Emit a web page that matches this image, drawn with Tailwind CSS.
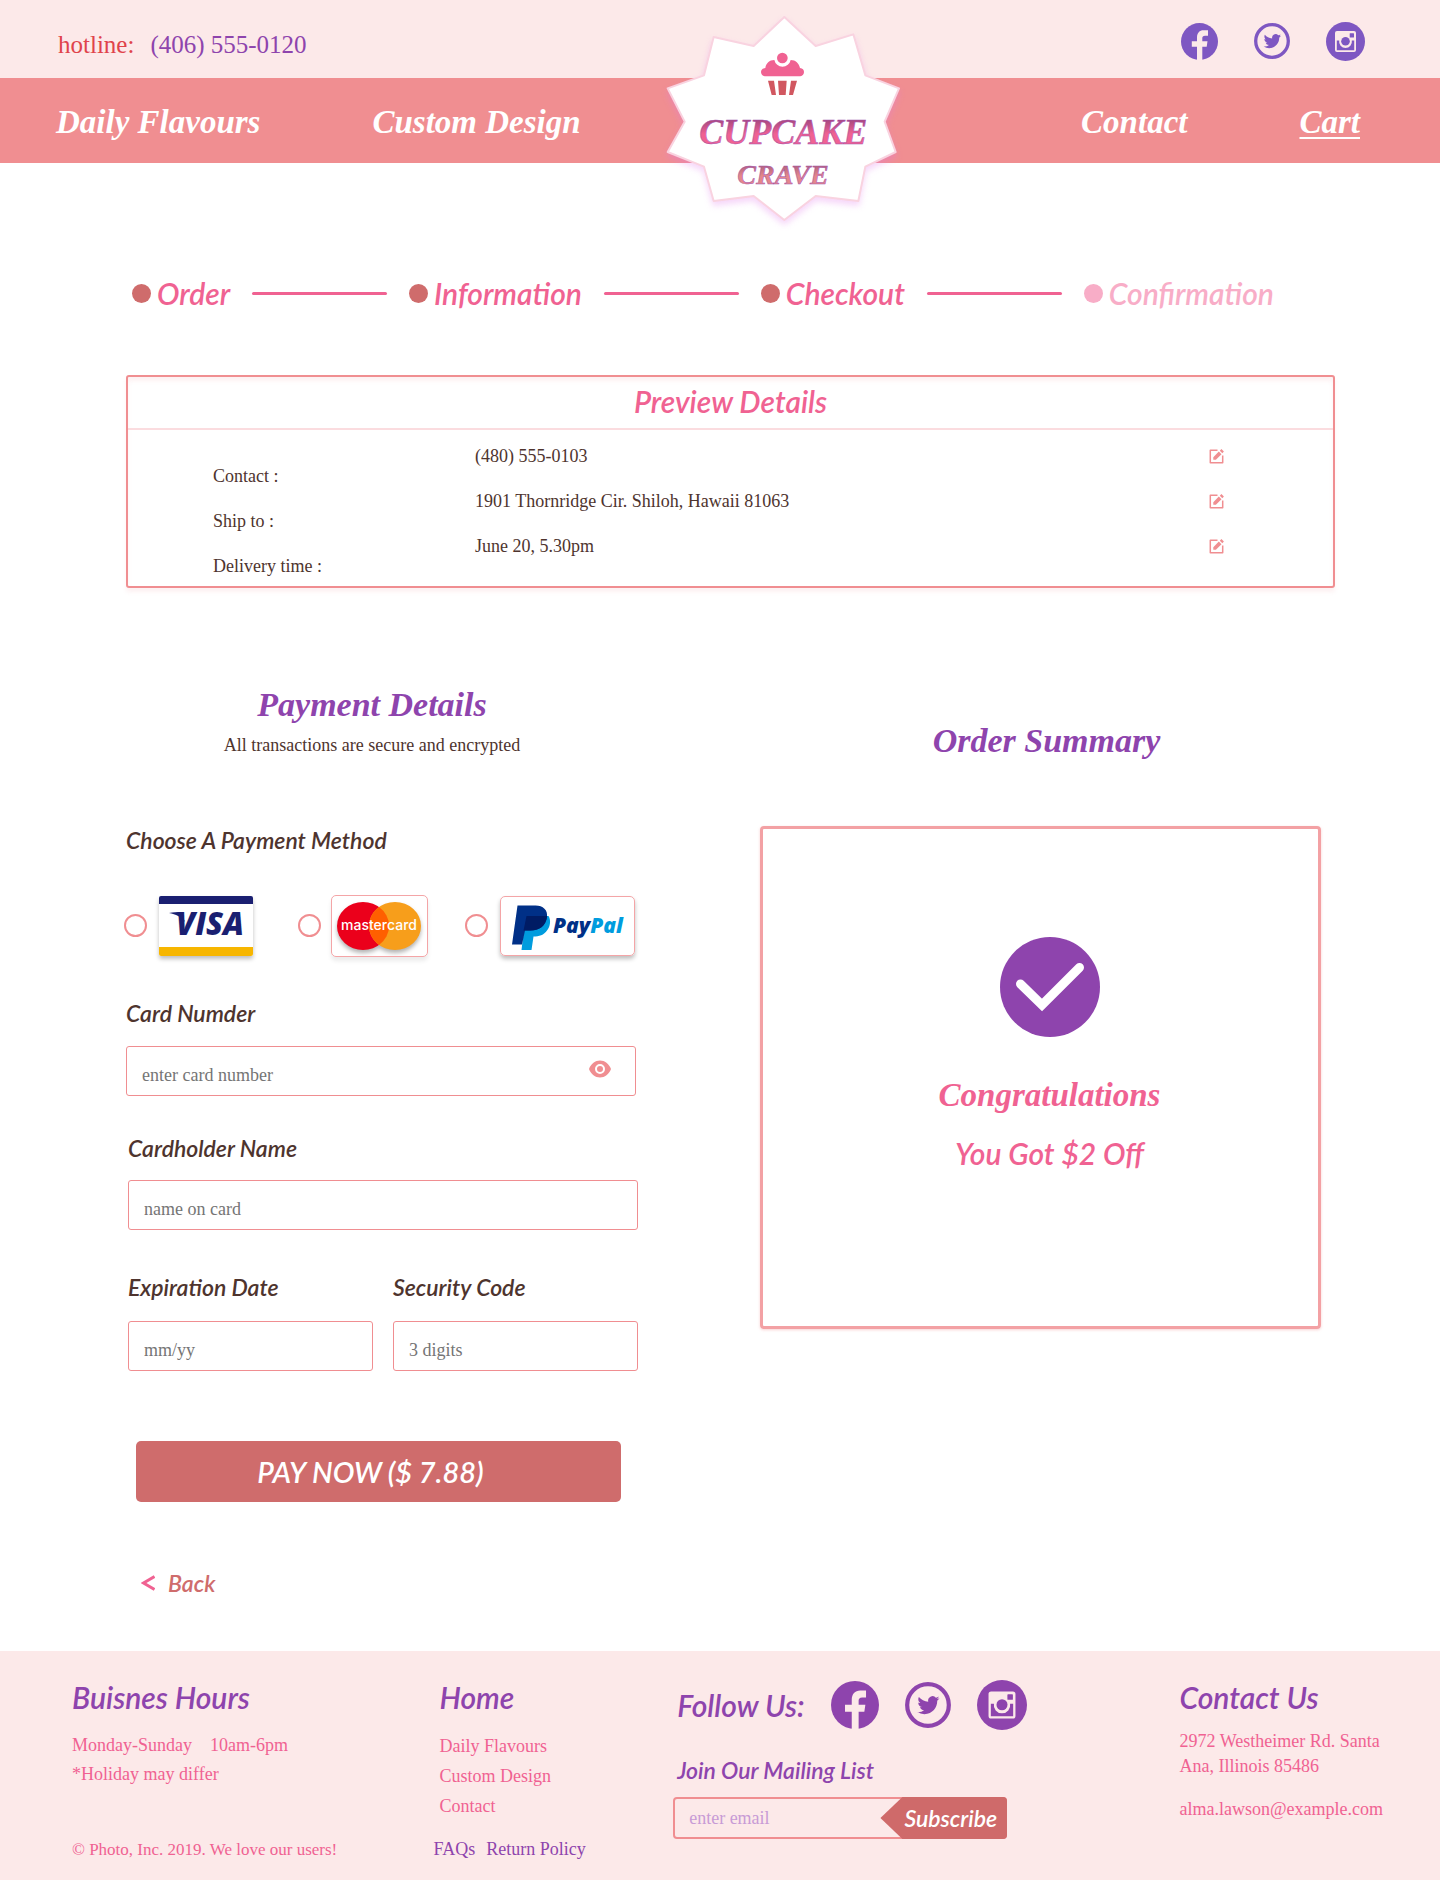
<!DOCTYPE html>
<html lang="en">
<head>
<meta charset="utf-8">
<meta name="viewport" content="width=device-width, initial-scale=1">
<title>Cupcake Crave – Checkout</title>
<script src="https://cdn.jsdelivr.net/npm/@tailwindcss/browser@4"></script>
</head>
<body class="bg-white font-['Liberation_Serif',serif] text-[18px] leading-6 text-[#4e342e]">

<!-- shared icons -->
<svg class="hidden" aria-hidden="true">
  <symbol id="facebook" viewBox="0 0 37 37">
    <circle cx="18.5" cy="18.5" r="18.5" fill="currentColor"/>
    <path d="M16 37V23.7h-5.2v-5.4H16V14.500c0-4.500 2.500-7.200 6.500-7.200H27v5.400h-3c-2 0-2.700 1-2.700 2.500v3.100h5.200l-.8 5.400h-4.400V37z" fill="#fce9e9"/>
  </symbol>
  <symbol id="twitter" viewBox="0 0 36 36">
    <circle cx="18" cy="18" r="16.300" fill="none" stroke="currentColor" stroke-width="3.300"/>
    <path transform="translate(9.700 9.500) scale(.72)" fill="currentColor" d="M23.953 4.57a10 10 0 01-2.825.775 4.958 4.958 0 002.163-2.723c-.951.555-2.005.959-3.127 1.184a4.920 4.920 0 00-8.384 4.482C7.690 8.095 4.067 6.130 1.640 3.162a4.822 4.822 0 00-.666 2.475c0 1.710.870 3.213 2.188 4.096a4.904 4.904 0 01-2.228-.616v.060a4.923 4.923 0 003.946 4.827 4.996 4.996 0 01-2.212.085 4.936 4.936 0 004.604 3.417 9.867 9.867 0 01-6.102 2.105c-.390 0-.779-.023-1.170-.067a13.995 13.995 0 007.557 2.209c9.053 0 13.998-7.496 13.998-13.985 0-.210 0-.420-.015-.630A9.935 9.935 0 0024 4.590z"/>
  </symbol>
  <symbol id="instagram" viewBox="0 0 39 39">
    <circle cx="19.500" cy="19.500" r="19.500" fill="currentColor"/>
    <rect x="9" y="9" width="21" height="21" rx="2" fill="#fce9e9"/>
    <path d="M10.800 18.500h2.400a6.400 6.400 0 1 0 12.600 0h2.400v9.700H10.800z" fill="currentColor"/>
    <circle cx="19.500" cy="19.300" r="4.300" fill="currentColor"/>
    <rect x="23.700" y="11.200" width="4.300" height="4.300" rx=".5" fill="currentColor"/>
  </symbol>
  <symbol id="edit" viewBox="0 0 15 15">
    <path d="M8.500 1.200H1.300V13.700H13.700V6.500" fill="none" stroke="currentColor" stroke-width="1.500" stroke-linejoin="round"/>
    <path d="M4.300 10.800V8.200L9.800 2.500l2.700 2.700-5.600 5.600zM10.800 1.700 12.400.1l2.500 2.500-1.600 1.600z" fill="currentColor"/>
  </symbol>
</svg>

<header class="relative">
  <div class="flex h-[78px] items-center justify-between bg-[#fce9e9] pr-[75px] pl-[58px]">
    <p class="flex gap-4 pt-3 text-[25px] leading-8"><span class="text-[#e0434b]">hotline:</span><a href="tel:+14065550120" class="text-[#8e44ad]">(406) 555-0120</a></p>
    <div class="flex items-center gap-9 pt-1 text-[#7e57c2]">
      <a href="#facebook-page" aria-label="Facebook"><svg class="size-[37px]"><use href="#facebook"/></svg></a>
      <a href="#twitter-page" aria-label="Twitter"><svg class="size-9"><use href="#twitter"/></svg></a>
      <a href="#instagram-page" aria-label="Instagram"><svg class="size-[39px]"><use href="#instagram"/></svg></a>
    </div>
  </div>
  <nav class="flex h-[85px] items-center justify-between bg-[#f08e91] pt-0.5 pr-20 pl-14 text-[33px] leading-10 font-bold text-white italic">
    <div class="flex gap-28"><a href="#flavours">Daily Flavours</a><a href="#design">Custom Design</a></div>
    <div class="flex gap-28"><a href="#contact">Contact</a><a href="#cart" class="underline decoration-2 underline-offset-4">Cart</a></div>
  </nav>
  <a href="#home" aria-label="Cupcake Crave" class="absolute top-[14px] left-1/2 -ml-[55px]">
    <svg class="h-[214px] w-60 overflow-visible" viewBox="75 42 720 642">
      <defs>
        <linearGradient id="pinkText" x1="0" y1="0" x2="0" y2="1"><stop offset=".2" stop-color="#a8487f"/><stop offset=".55" stop-color="#f06292"/><stop offset="1" stop-color="#f06292"/></linearGradient>
        <linearGradient id="peachText" x1="0" y1="0" x2="0" y2="1"><stop offset=".2" stop-color="#b0627c"/><stop offset=".55" stop-color="#e5878a"/><stop offset="1" stop-color="#e5878a"/></linearGradient>
      </defs>
      <path class="drop-shadow-[0_12px_10px_rgba(226,120,235,0.3)]" d="M433 51 527 138 640 103 676 226 777 265 734 365 767 456 676 500 655 603 527 588 433 660 341 588 221 603 192 500 83 456 134 365 83 265 192 226 221 111 341 138Z" fill="#fff" stroke="#f9d3e0" stroke-width="6" stroke-linejoin="round"/>
      <path d="M374 229c-7-2-11-7-11-13s5-11 13-12c2-14 12-24 27-24a25 25 0 0 0 49 0c15 0 25 10 28 24 8 1 12 6 12 12s-4 11-11 13z" fill="#f06292"/>
      <circle cx="427" cy="174" r="16" fill="#f06292"/>
      <path d="M384 242h18l6 43h-13zM414 242h26l-3 43h-20zM453 242h18l-12 43h-12z" fill="#d15760"/>
      <g text-anchor="middle" font-family="'Liberation Serif',serif" font-weight="700" font-style="italic" stroke="#a24fb0" stroke-width="1.500">
        <text x="430" y="432" font-size="108" fill="url(#pinkText)">CUPCAKE</text>
        <text x="429" y="552" font-size="84" fill="url(#peachText)">CRAVE</text>
      </g>
    </svg>
  </a>
</header>

<main class="pt-[110px] pr-[105px] pl-[126px]">
  <ol class="flex items-center justify-between pr-[61px] pl-1.5 font-['Lato',sans-serif] text-3xl leading-10 font-semibold text-[#f06292] italic">
    <li class="flex items-center gap-1.5"><span class="size-[19px] rounded-full bg-[#cf6c6c]"></span>Order</li>
    <li aria-hidden="true" class="h-[3px] w-[135px] rounded bg-[#f06292]"></li>
    <li class="flex items-center gap-1.5"><span class="size-[19px] rounded-full bg-[#cf6c6c]"></span>Information</li>
    <li aria-hidden="true" class="h-[3px] w-[135px] rounded bg-[#f06292]"></li>
    <li class="flex items-center gap-1.5" aria-current="step"><span class="size-[19px] rounded-full bg-[#cf6c6c]"></span>Checkout</li>
    <li aria-hidden="true" class="h-[3px] w-[135px] rounded bg-[#f06292]"></li>
    <li class="flex items-center gap-1.5 text-[#f8adc7]"><span class="size-[19px] rounded-full bg-[#f8adc7]"></span>Confirmation</li>
  </ol>

  <section class="mt-[62px] rounded-[3px] border-2 border-[#f08e91] pb-[7px] shadow-[0_4px_4px_#f08e911f,inset_0_4px_4px_#f08e911f]">
    <h2 class="border-b-2 border-[#fbdcdf] pt-1 pb-[7px] text-center font-['Lato',sans-serif] text-3xl leading-10 font-semibold text-[#f06292] italic">Preview Details</h2>
    <table class="mt-[14px] w-full text-left">
      <tr class="h-[45px] align-top">
        <th scope="row" class="w-[347px] pt-5 pl-[85px] font-normal">Contact :</th>
        <td>(480) 555-0103</td>
        <td class="w-[124px]"><button type="button" aria-label="Edit contact" class="flex h-6 items-center text-[#f08e91]"><svg class="size-[15px]"><use href="#edit"/></svg></button></td>
      </tr>
      <tr class="h-[45px] align-top">
        <th scope="row" class="pt-5 pl-[85px] font-normal">Ship to :</th>
        <td>1901 Thornridge Cir. Shiloh, Hawaii 81063</td>
        <td><button type="button" aria-label="Edit address" class="flex h-6 items-center text-[#f08e91]"><svg class="size-[15px]"><use href="#edit"/></svg></button></td>
      </tr>
      <tr class="h-[45px] align-top">
        <th scope="row" class="pt-5 pl-[85px] font-normal">Delivery time :</th>
        <td>June 20, 5.30pm</td>
        <td><button type="button" aria-label="Edit delivery time" class="flex h-6 items-center text-[#f08e91]"><svg class="size-[15px]"><use href="#edit"/></svg></button></td>
      </tr>
    </table>
  </section>

  <div class="mt-[97px] grid grid-cols-[512fr_561fr] gap-x-[122px] pr-[14px]">
    <form>
      <div class="pr-5 text-center">
        <h2 class="text-[34px] leading-10 font-bold text-[#8e44ad] italic">Payment Details</h2>
        <p class="mt-2">All transactions are secure and encrypted</p>
      </div>

      <fieldset class="mt-[67px]">
        <legend class="font-['Lato',sans-serif] text-[23px] leading-8 font-semibold italic">Choose A Payment Method</legend>
        <div class="mt-[38px] -ml-0.5 flex h-[63px] items-center">
          <label class="mr-[45px] flex items-center gap-3">
            <input type="radio" name="method" value="visa" aria-label="Visa" class="size-[23px] appearance-none rounded-full border-2 border-[#f08e91] checked:bg-[#f08e91]">
            <svg class="h-[60px] w-[94px] rounded-[2px] shadow-[0_3px_4px_rgba(0,0,0,0.25)]" viewBox="0 0 94 60">
              <path fill="#fff" d="M0 0h94v60H0z"/><path fill="#1a1f71" d="M0 0h94v8H0z"/><path fill="#f7b600" d="M0 51h94v9H0z"/>
              <path d="M10 17c4-1 8-1 12-1l4 10c-4-5-9-8-16-9z" fill="#1a1f71"/>
              <text x="17" y="39" font-family="'Open Sans',sans-serif" font-weight="800" font-style="italic" font-size="31" fill="#1a1f71">VISA</text>
            </svg>
          </label>
          <label class="mr-[37px] flex items-center gap-2.5">
            <input type="radio" name="method" value="mastercard" aria-label="Mastercard" class="size-[23px] appearance-none rounded-full border-2 border-[#f08e91] checked:bg-[#f08e91]">
            <svg class="h-[62px] w-[97px] rounded-[5px] border border-[#f4a5a7] shadow-[0_4px_4px_rgba(0,0,0,0.08)]" viewBox="0 0 95 60">
              <g class="drop-shadow-[0_3px_2px_rgba(0,0,0,0.3)]"><ellipse cx="31" cy="30" rx="26" ry="24" fill="#eb001b"/><ellipse cx="63" cy="30" rx="26" ry="24" fill="#f79e1b"/></g>
              <path d="M47 11a26 24 0 0 1 0 38a26 24 0 0 1 0-38z" fill="#ff5f00"/>
              <text x="47" y="34" text-anchor="middle" font-family="Inter,sans-serif" font-weight="500" font-size="14" fill="#fff">mastercard</text>
            </svg>
          </label>
          <label class="flex items-center gap-3">
            <input type="radio" name="method" value="paypal" aria-label="PayPal" class="size-[23px] appearance-none rounded-full border-2 border-[#f08e91] checked:bg-[#f08e91]">
            <svg class="h-[60px] w-[135px] rounded-[5px] border border-[#f4a5a7] shadow-[0_3px_4px_rgba(0,0,0,0.25)]" viewBox="0 0 133 58">
              <path d="M24.500 19H47.500C50 23 49.500 29 46 33.500 43 38 38 39.500 32.500 39.500L30.500 53H20.500z" fill="#009cde"/>
              <path d="M16.500 8.500H34.500C42 8.500 47 13 46 20 44.500 29 38.500 33.500 29.500 33.500H24L21 47.500H11z" fill="#003087"/>
              <path d="M25.500 19H46.200C45 28.800 38.500 33.500 29.500 33.500H22.500z" fill="#001c64"/>
              <text x="52" y="36" font-family="'Open Sans',sans-serif" font-weight="800" font-style="italic" font-size="21" fill="#003087">Pay<tspan fill="#009cde">Pal</tspan></text>
            </svg>
          </label>
        </div>
      </fieldset>

      <label for="number" class="mt-10 block font-['Lato',sans-serif] text-[23px] leading-8 font-semibold italic">Card Numder</label>
      <div class="mt-[17px] mr-0.5 flex h-[50px] items-center rounded-[3px] border border-[#f08e91] pr-6 pl-[15px]">
        <input id="number" type="text" inputmode="numeric" placeholder="enter card number" class="h-full min-w-0 flex-1 pt-2 outline-none placeholder:text-[#757575]">
        <button type="button" aria-label="Show card number" class="pb-1 text-[#f08e91]">
          <svg class="h-[18px] w-[22px]" viewBox="0 0 22 18"><path fill="currentColor" fill-rule="evenodd" d="M11 .5C6.300.5 2 3.700 0 9c2 5.300 6.300 8.500 11 8.500S20 14.300 22 9C20 3.700 15.700.5 11 .5zM11 4a5 5 0 1 1 0 10 5 5 0 0 1 0-10zm0 2a3 3 0 1 0 0 6 3 3 0 0 0 0-6z"/></svg>
        </button>
      </div>

      <label for="name" class="mt-9 block pl-0.5 font-['Lato',sans-serif] text-[23px] leading-8 font-semibold italic">Cardholder Name</label>
      <div class="mt-4 pl-0.5"><input id="name" type="text" placeholder="name on card" class="block h-[50px] w-full rounded-[3px] border border-[#f08e91] px-[15px] pt-2 placeholder:text-[#757575]"></div>

      <div class="mt-[41px] grid grid-cols-2 gap-x-5 pl-0.5">
        <div>
          <label for="expiry" class="block font-['Lato',sans-serif] text-[23px] leading-8 font-semibold italic">Expiration Date</label>
          <input id="expiry" type="text" placeholder="mm/yy" class="mt-[18px] block h-[50px] w-full rounded-[3px] border border-[#f08e91] px-[15px] pt-2 placeholder:text-[#757575]">
        </div>
        <div>
          <label for="code" class="block font-['Lato',sans-serif] text-[23px] leading-8 font-semibold italic">Security Code</label>
          <input id="code" type="text" placeholder="3 digits" class="mt-[18px] block h-[50px] w-full rounded-[3px] border border-[#f08e91] px-[15px] pt-2 placeholder:text-[#757575]">
        </div>
      </div>

      <div class="mt-[70px] pr-[17px] pl-2.5"><button type="submit" class="block h-[61px] w-full rounded-[5px] bg-[#cf6c6c] pr-4 font-['Lato',sans-serif] text-[29px] leading-10 font-semibold text-white italic">PAY NOW ($ 7.88)</button></div>

      <a href="#information" class="mt-[65px] ml-[15px] inline-flex items-center gap-[13px] align-top font-['Lato',sans-serif] text-[23px] leading-8 font-semibold text-[#cf6c6c] italic">
        <svg class="h-4 w-[14px]" viewBox="0 0 14 16"><path d="M13.500 1.500 2.500 8l11 6.500" fill="none" stroke="#f06292" stroke-width="3"/></svg>Back</a>
    </form>

    <section class="pt-9 text-center">
      <h2 class="pl-3 text-[34px] leading-10 font-bold text-[#8e44ad] italic">Order Summary</h2>
      <div class="mt-[65px] min-h-[503px] rounded-[4px] border-[3px] border-[#f3a1a4] pt-[108px] pl-[18px] shadow-[0_1px_3px_#f08e9166]">
        <svg class="mx-auto size-[100px]" viewBox="0 0 100 100"><circle cx="50" cy="50" r="50" fill="#8e44ad"/><path d="M20.500 47 42 68 79.500 30.500" fill="none" stroke="#fff" stroke-width="9" stroke-linecap="round"/></svg>
        <p class="mt-[38px] text-[33px] leading-10 font-bold text-[#f06292] italic">Congratulations</p>
        <p class="mt-[18px] font-['Lato',sans-serif] text-3xl leading-10 font-semibold text-[#f06292] italic">You Got $2 Off</p>
      </div>
    </section>
  </div>
</main>

<footer class="mt-[52px] grid grid-cols-[368fr_238fr_503fr_202fr] bg-[#fce9e9] pt-[26px] pr-[57px] pb-[18px] pl-[72px] whitespace-nowrap text-[#f06292]">
  <div>
    <h3 class="font-['Lato',sans-serif] text-3xl leading-10 font-semibold text-[#8e44ad] italic">Buisnes Hours</h3>
    <p class="mt-4 flex gap-[18px]"><span>Monday-Sunday</span><span>10am-6pm</span></p>
    <p class="mt-[5px]">*Holiday may differ</p>
    <p class="mt-[52px] text-[17px]">© Photo, Inc. 2019. We love our users!</p>
  </div>
  <div>
    <h3 class="font-['Lato',sans-serif] text-3xl leading-10 font-semibold text-[#8e44ad] italic">Home</h3>
    <ul class="mt-[14px] leading-[30px]">
      <li><a href="#flavours">Daily Flavours</a></li>
      <li><a href="#design">Custom Design</a></li>
      <li><a href="#contact">Contact</a></li>
    </ul>
    <p class="mt-4 -ml-1.5 flex gap-[11px] text-[#8e44ad]"><a href="#faqs">FAQs</a><a href="#returns">Return Policy</a></p>
  </div>
  <div>
    <div class="mt-[3px] flex h-[50px] items-center gap-[26px] text-[#8e44ad]">
      <h3 class="font-['Lato',sans-serif] text-3xl leading-10 font-semibold italic">Follow Us:</h3>
      <a href="#facebook-page" aria-label="Facebook"><svg class="size-12"><use href="#facebook"/></svg></a>
      <a href="#twitter-page" aria-label="Twitter"><svg class="size-[46px]"><use href="#twitter"/></svg></a>
      <a href="#instagram-page" aria-label="Instagram"><svg class="size-[50px]"><use href="#instagram"/></svg></a>
    </div>
    <form>
      <label for="email" class="mt-6 block font-['Lato',sans-serif] text-[23px] leading-8 font-semibold text-[#8e44ad] italic">Join Our Mailing List</label>
      <div class="mt-[11px] -ml-1 flex h-[42px] w-[334px] rounded-[4px] border-2 border-[#f08e91] pl-[14px]">
        <input id="email" type="email" placeholder="enter email" class="min-w-0 flex-1 outline-none placeholder:text-[#c89bd6]">
        <button type="submit" class="-my-0.5 -mr-0.5 rounded-r-[4px] bg-[#cf6a6a] pr-2.5 pl-6 font-['Lato',sans-serif] text-[23px] leading-8 font-semibold text-white italic [clip-path:polygon(0_50%,22px_0,100%_0,100%_100%,22px_100%)]">Subscribe</button>
      </div>
    </form>
  </div>
  <div id="contact">
    <h3 class="font-['Lato',sans-serif] text-3xl leading-10 font-semibold text-[#8e44ad] italic">Contact Us</h3>
    <address class="mt-3 leading-[25px] not-italic">2972 Westheimer Rd. Santa<br>Ana, Illinois 85486</address>
    <a href="mailto:alma.lawson@example.com" class="mt-[18px] block">alma.lawson@example.com</a>
  </div>
</footer>
</body>
</html>
